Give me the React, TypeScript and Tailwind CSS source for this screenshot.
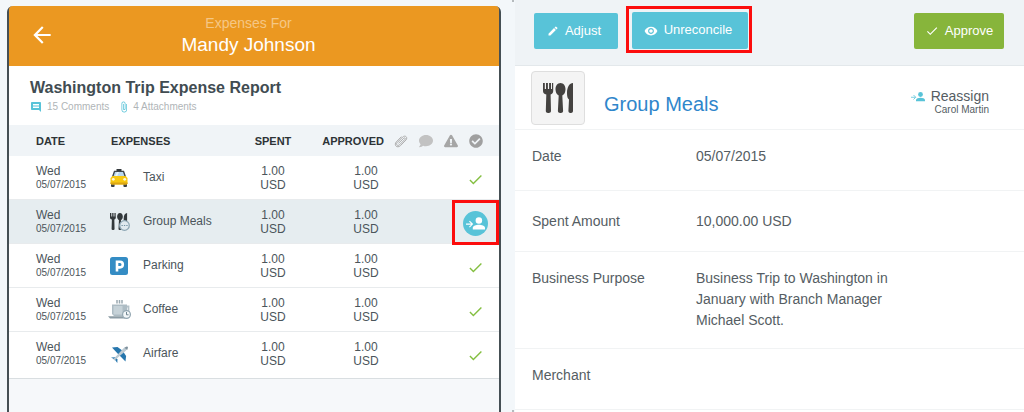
import type { ReactNode } from "react";
import clsx from "clsx";
import {
  FaCheckCircle,
  FaComment,
  FaExclamationTriangle,
} from "react-icons/fa";
import {
  MdArrowBack,
  MdAttachFile,
  MdCheck,
  MdComment,
  MdEdit,
  MdRemoveRedEye,
} from "react-icons/md";

function AssignIcon({ className }: { className?: string }) {
  return (
    <svg viewBox="0 0 28 20" className={className} aria-hidden="true">
      <g fill="currentColor">
        <circle cx="19" cy="5" r="4.800" />
        <path d="M10 18.500v-2.500c0-3 5-4.500 9-4.500s9 1.500 9 4.500v2.500z" />
      </g>
      <path
        d="M0 10.500h9M5 6l4.500 4.500-4.500 4.500"
        fill="none"
        stroke="currentColor"
        strokeWidth="1.6"
      />
    </svg>
  );
}

function ClipIcon() {
  return (
    <svg viewBox="0 0 14 14" className="mx-auto size-3.5 text-[#adadad]" aria-hidden="true">
      <path
        d="M4.500 9.300L9.800 4.200c.9-.9 2 .2 1.200 1.100L5.500 10.800c-1.800 1.700-4-.4-2.400-2.100L8.700 3c2.500-2.300 5.500.5 3.200 3L6.500 11.600c-3.400 3.200-7-.6-4.200-3.700L7.500 2.600"
        fill="none"
        stroke="currentColor"
        strokeWidth="1"
      />
    </svg>
  );
}

function Cutlery() {
  return (
    <g fill="currentColor">
      <path d="M0 0h1.800v6h1.200V0h1.900v6h1.200V0H8v6h1V0h1.200v8c0 1.800-1 3-2.600 3.500L8 28c0 2.700-5.200 2.700-5.200 0l.5-16.500C1 11 0 9.800 0 8z" />
      <path d="M17.500 0c3 0 5 2.800 5 6.200 0 3-1.300 5.400-3.200 6.300l.8 15.500c0 2.700-5.200 2.700-5.200 0l.8-15.500c-1.900-.9-3.200-3.300-3.200-6.300C12.500 2.800 14.500 0 17.500 0z" />
      <path d="M30 0v28c0 2.700-4.600 2.700-4.600 0l.6-11.500c-1.500-1-2-3-2-6.500C24 4 26.500 0 30 0z" />
    </g>
  );
}

function TaxiIcon() {
  return (
    <svg viewBox="0 0 20 20" className="size-5" aria-hidden="true">
      <path d="M7.500 1h5v2h-5z" fill="#33383c" />
      <path d="M5 2.800h10L17.200 9H2.800z" fill="#3f464b" />
      <path d="M6 4h8l1.500 4.500h-11z" fill="#b9d7ee" />
      <path d="M8 4h2l-2 4.500H5.800z" fill="#e6f2fa" />
      <rect x="2" y="15" width="3.600" height="4" rx="1" fill="#3a3f43" />
      <rect x="14.400" y="15" width="3.600" height="4" rx="1" fill="#3a3f43" />
      <path d="M3.500 8h13l2 2v5.500l-1 1h-15l-1-1V10z" fill="#f7c811" />
      <path d="M1.500 14.500h17v1l-1 1h-15l-1-1z" fill="#dba514" />
      <circle cx="4.300" cy="11.300" r="1.400" fill="#fff8d8" />
      <circle cx="15.700" cy="11.300" r="1.400" fill="#fff8d8" />
    </svg>
  );
}

function MealsIcon() {
  return (
    <svg viewBox="0 0 22 20" className="h-5 w-[22px] text-[#33383b]" aria-hidden="true">
      <g transform="translate(2 1) scale(.57)">
        <Cutlery />
      </g>
      <circle cx="16.500" cy="13.500" r="4.800" fill="#dfe9ef" stroke="#8ea7b5" strokeWidth="1.300" />
      <path d="M13.500 13.500h1.300M15.900 13.500h1.300M18.300 13.500h1.300" stroke="#7191a3" strokeWidth="1.200" />
    </svg>
  );
}

function ParkingIcon() {
  return (
    <svg viewBox="0 0 20 20" className="size-5" aria-hidden="true">
      <rect x="1" y="1" width="18" height="18" rx="2.500" fill="#348cc4" />
      <path
        d="M8 15.500V5.800h3a2.700 2.700 0 0 1 0 5.600H8"
        fill="none"
        stroke="#fff"
        strokeWidth="2.600"
      />
    </svg>
  );
}

function CoffeeIcon() {
  return (
    <svg viewBox="0 0 24 20" className="h-5 w-6" aria-hidden="true">
      <path d="M10 0v3.500M12.500 0v3.500M15 0v3.500" stroke="#9aa9b1" strokeWidth="1.500" />
      <path d="M19 6.500h2.500V12" fill="none" stroke="#b5c2c9" strokeWidth="1.800" />
      <path d="M5 4.500h15V16H7l-2-2z" fill="#adbcc4" />
      <path d="M6.500 6h9v8.500h-9z" fill="#c6d2d8" />
      <path d="M1 16.200h17v2.300H3z" fill="#8c9ca5" />
      <circle cx="19.500" cy="14.500" r="3.900" fill="#f2f6f8" stroke="#91a5b0" strokeWidth="1.200" />
      <path d="M19.500 12v2.800h2" fill="none" stroke="#6f8591" />
    </svg>
  );
}

function PlaneIcon() {
  return (
    <svg viewBox="0 0 20 20" className="size-5" aria-hidden="true">
      <path d="M3 3.500l5.500-.5 5.500 4-4 4z" fill="#2676ad" />
      <path d="M16.500 17.500l.6-5.500-4-6-4 4z" fill="#2676ad" />
      <path d="M2 13.500l4.500-.3 2 2L8.300 19l-2.500-3.500z" fill="#2676ad" />
      <path d="M5.500 16.500L4.300 15.300 14.300 4.600c1.300-1.400 3.300-2.400 4.200-2 .6.800-.3 2.700-1.700 4.100z" fill="#bccad3" />
      <path d="M15.500 3.700l2.700 2.300.8-2.500-1-1z" fill="#7e909b" />
    </svg>
  );
}

const expenses: { name: string; icon: ReactNode; selected?: boolean }[] = [
  { name: "Taxi", icon: <TaxiIcon /> },
  { name: "Group Meals", icon: <MealsIcon />, selected: true },
  { name: "Parking", icon: <ParkingIcon /> },
  { name: "Coffee", icon: <CoffeeIcon /> },
  { name: "Airfare", icon: <PlaneIcon /> },
];

const details = [
  { label: "Date", value: "05/07/2015", size: "min-h-[61px] pt-4" },
  { label: "Spent Amount", value: "10,000.00 USD", size: "min-h-[61px] pt-5" },
  {
    label: "Business Purpose",
    value: "Business Trip to Washington in January with Branch Manager Michael Scott.",
    size: "min-h-[97px] pt-4",
  },
  { label: "Merchant", value: "", size: "min-h-[61px] pt-4" },
];

function ExpenseTable() {
  return (
    <table className="w-full table-fixed border-separate border-spacing-0 bg-white text-xs leading-[14px] text-[#4b555b]">
      <colgroup>
        <col className="w-[100px]" />
        <col />
        <col className="w-[68px]" />
        <col className="w-[81px]" />
        <col className="w-[25px]" />
        <col className="w-[25px]" />
        <col className="w-[25px]" />
        <col className="w-9" />
      </colgroup>
      <thead>
        <tr className="h-[31px] bg-[#f0f4f7] text-[11px] text-[#2d3336]">
          <th className="pl-[27px] text-left">DATE</th>
          <th className="pl-0.5 text-left">EXPENSES</th>
          <th className="text-center">SPENT</th>
          <th className="pr-1 text-right">APPROVED</th>
          <th aria-label="Attachments">
            <ClipIcon />
          </th>
          <th aria-label="Comments">
            <FaComment className="mx-auto size-3.5 text-[#c2c2c2]" />
          </th>
          <th aria-label="Warnings">
            <FaExclamationTriangle className="mx-auto size-3.5 text-[#a6a6a6]" />
          </th>
          <th className="pr-[11px]" aria-label="Status">
            <FaCheckCircle className="mx-auto size-3.5 text-[#a0a0a0]" />
          </th>
        </tr>
      </thead>
      <tbody>
        {expenses.map(({ name, icon, selected }) => (
          <tr
            key={name}
            className={clsx(
              "h-11 align-top last:h-[47px] [&>td]:border-b [&>td]:border-[#e8ebed] last:[&>td]:border-[#d9dee1]",
              selected && "bg-[#e6edf0]",
            )}
          >
            <td className="pt-2 pl-[27px]">
              Wed
              <div className="text-[10px] leading-[14px]">05/07/2015</div>
            </td>
            <td className="pt-3">
              <div className="flex h-5 items-center">
                <span className="flex w-[34px] shrink-0">
                  <span className="-ml-0.5 flex w-6 justify-center">{icon}</span>
                </span>
                <span className="pb-0.5">{name}</span>
              </div>
            </td>
            <td className="pt-2 text-center">
              1.00
              <br />
              USD
            </td>
            <td className="pt-2 pl-[37px] text-center">
              1.00
              <br />
              USD
            </td>
            <td />
            <td />
            <td />
            <td className={clsx("relative pr-[11px]", selected ? "pt-[11px]" : "pt-[15px]")}>
              {selected ? (
                <>
                  <button
                    type="button"
                    aria-label="Reassign Group Meals"
                    className="mx-auto flex size-[25px] items-center justify-center rounded-full bg-[#58c3d8] text-white"
                  >
                    <AssignIcon className="w-[19px]" />
                  </button>
                  <span className="pointer-events-none absolute top-0 right-0 h-[45px] w-[47px] border-3 border-[#fc0d0d]" />
                </>
              ) : (
                <MdCheck className="mx-auto size-[17px] text-[#84bf41]" />
              )}
            </td>
          </tr>
        ))}
      </tbody>
    </table>
  );
}

function ReportPanel() {
  return (
    <section className="relative flex bg-[#f3f7fa] pt-1.5 pr-3.5 pl-[7px]">
      <div className="flex-1 rounded-t-md border-x-2 border-[#454f54] bg-[#f6f8fa]">
        <header className="flex h-15 items-center rounded-t bg-[#eb9821] pb-0.5 pl-5">
          <button type="button" aria-label="Back" className="text-white">
            <MdArrowBack className="size-[26px]" />
          </button>
          <div className="flex-1 pr-[57px] text-center">
            <p className="text-sm leading-5 text-[#f5c785]">Expenses For</p>
            <h1 className="text-[19px] leading-6 text-white">Mandy Johnson</h1>
          </div>
        </header>

        <div className="h-[59px] bg-white pt-3 pl-[21px]">
          <h2 className="text-base leading-5 font-bold text-[#414c52]">
            Washington Trip Expense Report
          </h2>
          <div className="flex items-center text-[10px] leading-[18px] text-[#b0b5b7]">
            <MdComment className="mr-[5px] size-3 text-[#58c3d8]" />
            15 Comments
            <MdAttachFile className="mr-[3px] ml-[9px] size-3 text-[#58c3d8]" />
            4 Attachments
          </div>
        </div>

        <ExpenseTable />
      </div>
      <span className="absolute top-0 right-px size-0.5 bg-[#b5babd]" />
      <span className="absolute right-px bottom-0 size-0.5 bg-[#b5babd]" />
    </section>
  );
}

function DetailPanel() {
  return (
    <section className="bg-white text-sm text-[#555d63]">
      <div className="flex h-[66px] items-end gap-3.5 border-b border-[#e3e8eb] bg-[#eff3f6] pr-5 pb-4 pl-[19px] text-white">
        <button
          type="button"
          className="flex h-9 w-21 items-center justify-center gap-1.5 rounded-xs bg-[#58c3d8] pr-1 text-[13px]"
        >
          <MdEdit className="size-3" />
          Adjust
        </button>
        <div className="relative">
          <button
            type="button"
            className="flex h-[37px] w-[116px] items-center justify-center gap-1.5 rounded-xs bg-[#58c3d8] pr-1 text-[13px]"
          >
            <MdRemoveRedEye className="size-3.5" />
            Unreconcile
          </button>
          <span className="pointer-events-none absolute -top-1.5 -right-1 -bottom-1 -left-1.5 border-3 border-[#fc0d0d]" />
        </div>
        <button
          type="button"
          className="ml-auto flex h-9 w-[90px] items-center justify-center gap-1.5 rounded-xs bg-[#87b53b] text-[13px]"
        >
          <MdCheck className="size-3.5" />
          Approve
        </button>
      </div>

      <div className="flex h-16 items-center border-b border-[#f1f3f4] pr-[35px] pl-4">
        <div className="flex size-[54px] items-center justify-center rounded border border-[#dedede] bg-[#f4f4f4] text-[#444240]">
          <svg viewBox="0 0 30 30" className="size-[30px]" aria-hidden="true">
            <Cutlery />
          </svg>
        </div>
        <h2 className="pt-3 pl-[19px] text-xl leading-6 text-[#2f86cb]">Group Meals</h2>
        <div className="ml-auto flex gap-1.5 pt-2">
          <AssignIcon className="mt-1 w-3.5 self-start text-[#58c3d8]" />
          <div className="text-right">
            <a href="#reassign" className="block leading-4">
              Reassign
            </a>
            <p className="text-[10px] leading-3">Carol Martin</p>
          </div>
        </div>
      </div>

      <dl className="leading-[21px]">
        {details.map(({ label, value, size }) => (
          <div key={label} className={clsx("flex border-b border-[#f1f3f4] pl-[17px]", size)}>
            <dt className="w-41 shrink-0">{label}</dt>
            <dd className="max-w-[210px]">{value}</dd>
          </div>
        ))}
      </dl>
    </section>
  );
}

export default function App() {
  return (
    <main className="grid min-h-screen grid-cols-[515fr_509fr] font-['Liberation_Sans',Arial,sans-serif]">
      <ReportPanel />
      <DetailPanel />
    </main>
  );
}
